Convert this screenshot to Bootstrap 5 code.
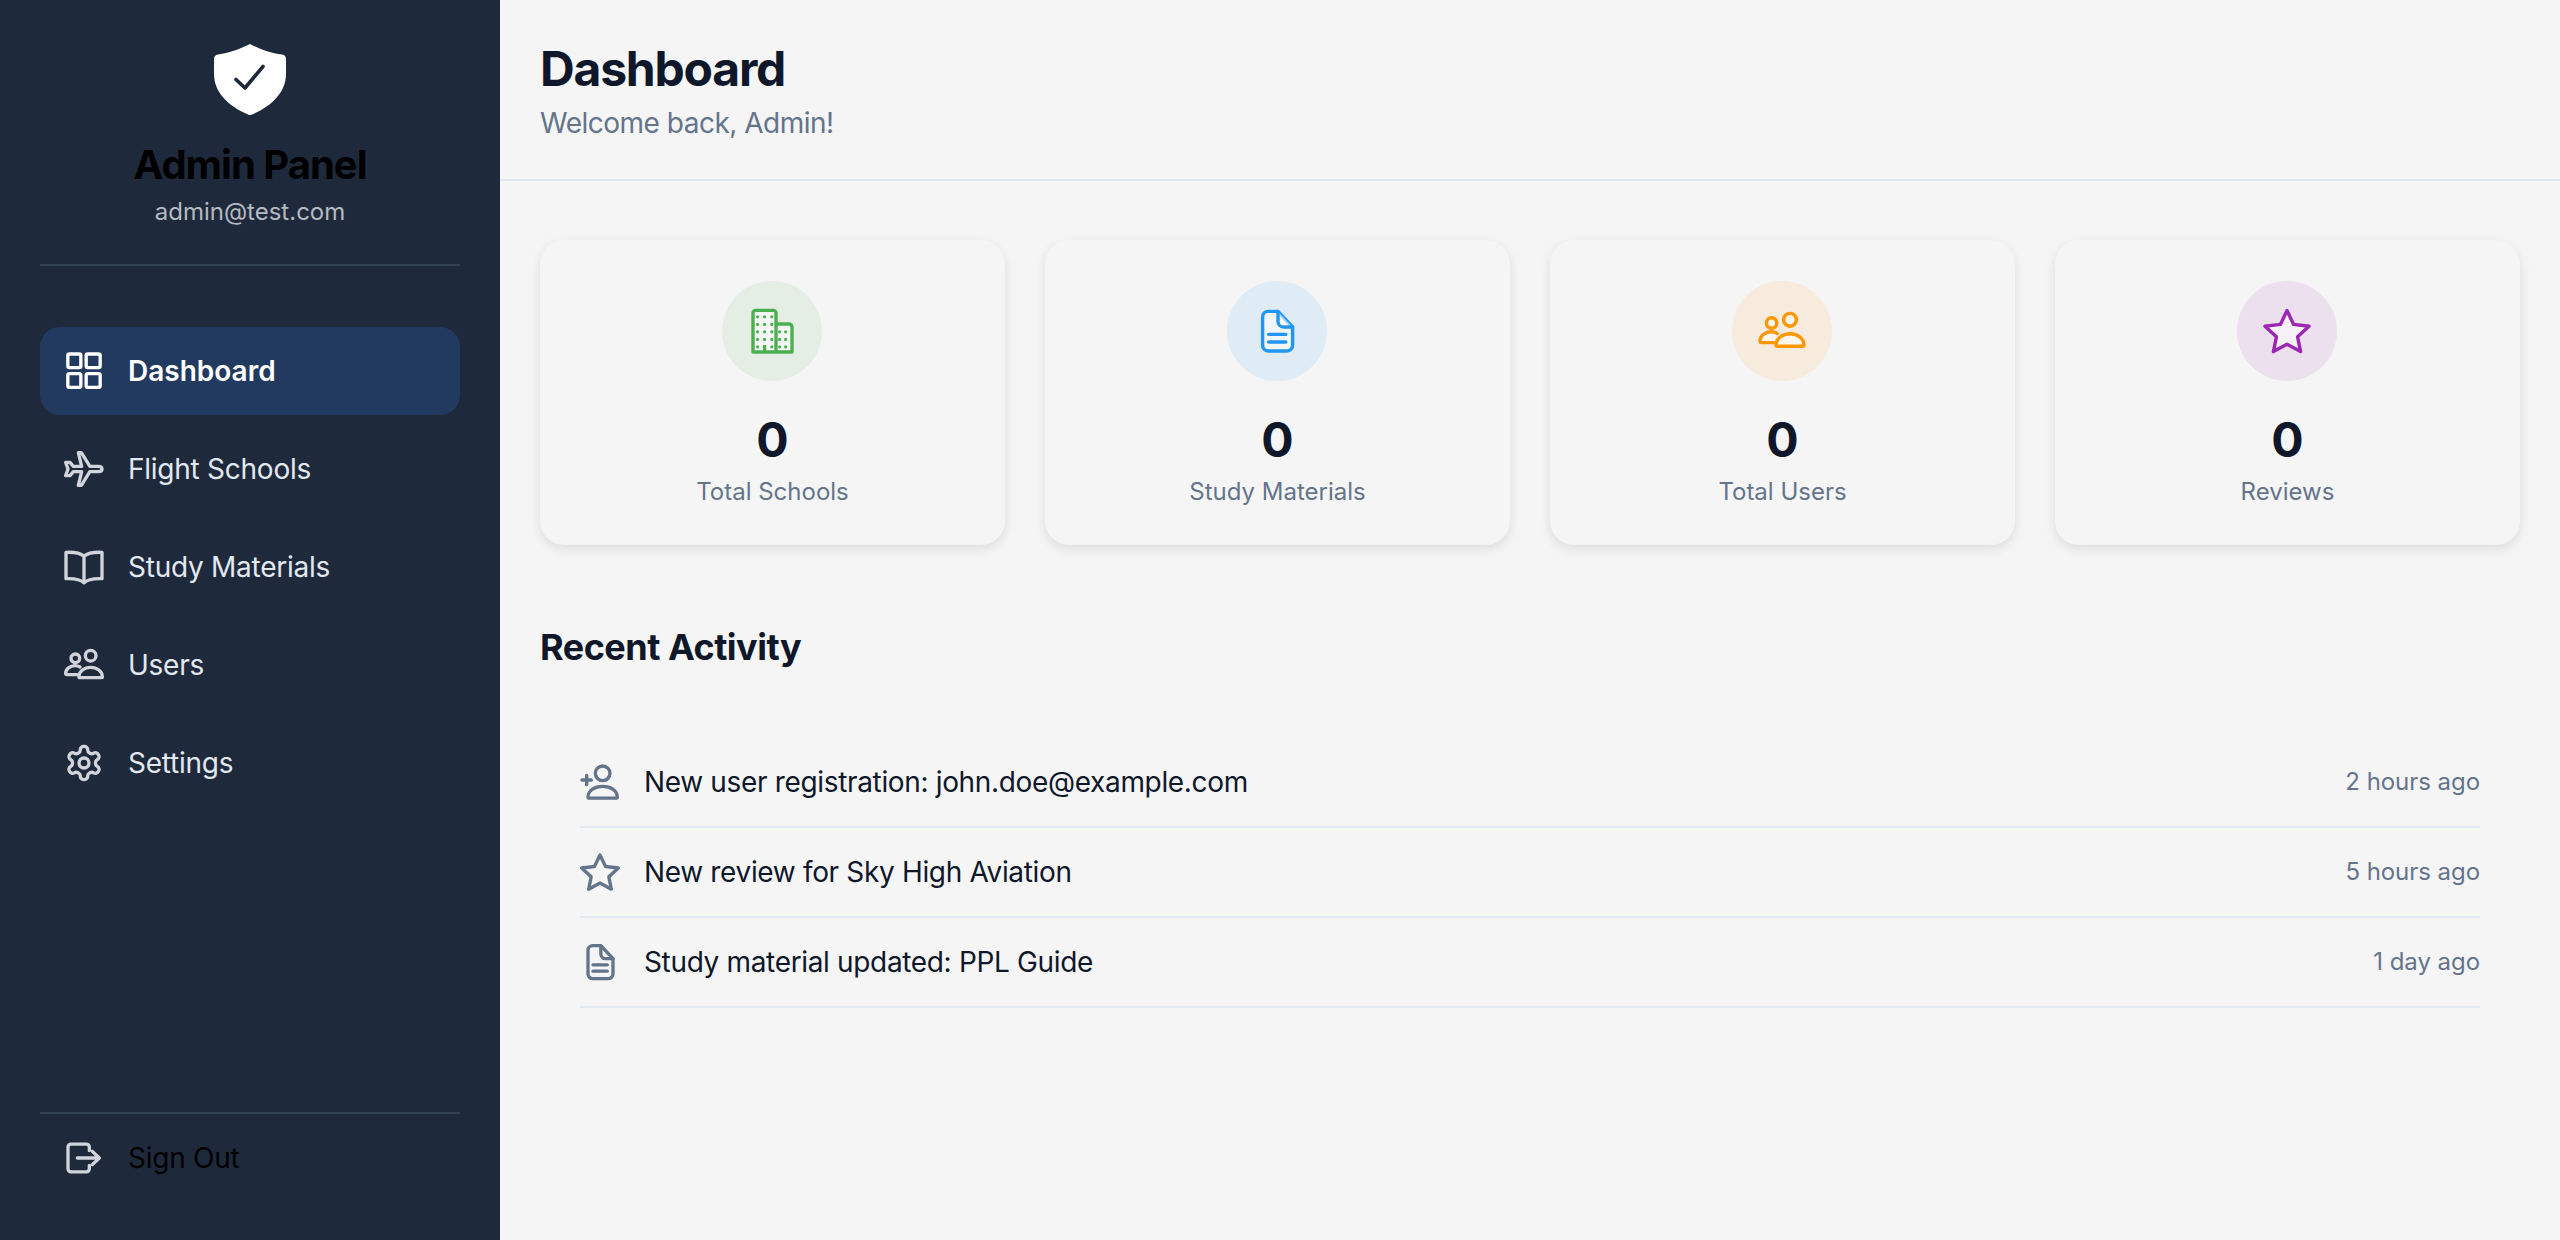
<!DOCTYPE html>
<html>

<head>
  <title>Admin Panel</title>
  <link href="https://cdn.jsdelivr.net/npm/bootstrap@5.3.2/dist/css/bootstrap.min.css" rel="stylesheet" type="text/css" />
  <style>
    html, body { height: 100%; }
    body { font-family: "Inter", "Liberation Sans", sans-serif; background: #f5f5f5; overflow: hidden; }

    /* sidebar */
    .side-panel { width: 500px; height: 1240px; background: #1e293b; padding: 40px 40px 38px; flex-shrink: 0; }
    .side-brand { height: 226px; border-bottom: 2px solid #334155; margin-bottom: 61px; }
    .brand-title { font-size: 40px; line-height: 48px; font-weight: 700; color: #000; margin: 25px 0 0; letter-spacing: -1px; }
    .brand-mail { font-size: 24px; line-height: 32px; color: #b5b9c1; margin-top: 7px; }
    .side-link { height: 88px; padding: 0 24px; gap: 24px; border-radius: 20px; font-size: 28px; color: #e2e8f0; text-decoration: none; margin-bottom: 10px; letter-spacing: -.25px; }
    .side-link svg { color: #d1d5db; }
    .side-link.current { background: #233a60; color: #fff; font-weight: 600; letter-spacing: 0; }
    .side-link.current svg { color: #fff; }
    .side-foot { border-top: 2px solid #334155; margin-top: auto; }
    .side-foot .side-link { color: #000; margin: 0; }

    /* main */
    .page-top { height: 181px; padding: 41px 40px 0; border-bottom: 2px solid #e2e8f0; }
    .page-title { font-size: 48px; line-height: 56px; font-weight: 700; color: #0f172a; margin: 0; letter-spacing: -1.2px; }
    .page-sub { font-size: 28px; line-height: 36px; color: #64748b; margin-top: 8px; letter-spacing: -.5px; }
    .page-body { padding: 59px 40px 0; }
    .stat-grid { display: grid; grid-template-columns: repeat(4, 465px); gap: 40px; }
    .stat-box { height: 305px; padding-top: 41px; border-radius: 24px; background: #f5f5f5; box-shadow: 0 4px 12px rgba(0, 0, 0, .1); text-align: center; }
    .stat-circle { width: 100px; height: 100px; border-radius: 50%; margin: 0 183px 29px 182px; }
    .stat-value { font-size: 48px; line-height: 60px; font-weight: 700; color: #0f172a; }
    .stat-label { font-size: 24px; line-height: 32px; color: #64748b; margin-top: 6px; }
    .tone-green { color: #4caf50; background: rgba(76, 175, 80, .1); }
    .tone-blue { color: #2196f3; background: rgba(33, 150, 243, .1); }
    .tone-orange { color: #ff9800; background: rgba(255, 152, 0, .1); }
    .tone-purple { color: #9c27b0; background: rgba(156, 39, 176, .1); }
    .section-title { font-size: 36px; line-height: 44px; font-weight: 700; color: #0f172a; margin: 80px 0 69px; letter-spacing: -.5px; }
    .activity-list { margin: 0 40px; }
    .activity-row { height: 90px; gap: 24px; border-bottom: 2px solid #e2e8f0; }
    .activity-row svg { color: #64748b; }
    .activity-text { font-size: 28px; color: #0f172a; letter-spacing: -.34px; }
    .activity-time { font-size: 24px; color: #64748b; margin-left: auto; letter-spacing: -.05px; }

    .line-icon { fill: none; stroke: currentColor; stroke-width: 2; stroke-linecap: round; stroke-linejoin: round; flex-shrink: 0; }
    .duo-icon { fill: rgba(255, 255, 255, .55); stroke: currentColor; stroke-width: 1.7; stroke-linecap: round; stroke-linejoin: round; }
    .duo-icon .dot { fill: currentColor; stroke: none; }
  </style>
</head>

<body>
  <svg width="0" height="0" class="position-absolute">
    <symbol id="ic-grid" viewBox="0 0 24 24"><rect x="2.300" y="1.800" width="7.800" height="8.200" rx="1"/><rect x="13.300" y="1.800" width="8.400" height="8.200" rx="1"/><rect x="2.300" y="13.600" width="7.800" height="8.200" rx="1"/><rect x="13.300" y="13.600" width="8.400" height="8.200" rx="1"/></symbol>
    <symbol id="ic-plane" viewBox="0 0 24 24"><path d="M22.800 12c0-1-1-1.600-2.200-1.600h-5.100L10.700 2.600a.7.7 0 0 0-.6-.4H8.600l2 8.200h-5L3.600 8H1l1.400 4L1 16h2.600l2-2.400h5l-2 8.200h1.500a.7.7 0 0 0 .6-.4l4.800-7.800h5.100c1.200 0 2.200-.6 2.200-1.600z"/></symbol>
    <symbol id="ic-book" viewBox="0 0 24 24"><path d="M12 5.500C10 3.800 6 3 1.200 3.200V19c4.800-.2 8.800.5 10.800 2.500 2-2 6-2.700 10.800-2.500V3.200C18 3 14 3.800 12 5.500zM12 5.500V21"/></symbol>
    <symbol id="ic-users" viewBox="0 0 24 24"><circle cx="6.800" cy="8" r="2.600"/><circle cx="16" cy="6.400" r="3.200"/><path d="M9 19c0-3.200 3.200-5.600 7-5.600s7 2.400 7 5.600q0 .6-.6.6H9.600q-.6 0-.6-.6z"/><path d="M9.600 13.200c-.9-.5-2-.8-3-.8-3 0-5.600 2-5.600 4.600q0 .8.8.8h6"/></symbol>
    <symbol id="ic-gear" viewBox="0 0 24 24"><path d="M12.220 2h-.44a2 2 0 0 0-2 2v.18a2 2 0 0 1-1 1.730l-.43.25a2 2 0 0 1-2 0l-.15-.08a2 2 0 0 0-2.730.73l-.22.38a2 2 0 0 0 .73 2.730l.15.1a2 2 0 0 1 1 1.720v.51a2 2 0 0 1-1 1.740l-.15.09a2 2 0 0 0-.73 2.730l.22.38a2 2 0 0 0 2.730.73l.15-.08a2 2 0 0 1 2 0l.43.25a2 2 0 0 1 1 1.730V20a2 2 0 0 0 2 2h.44a2 2 0 0 0 2-2v-.18a2 2 0 0 1 1-1.730l.43-.25a2 2 0 0 1 2 0l.15.08a2 2 0 0 0 2.730-.73l.22-.39a2 2 0 0 0-.73-2.730l-.15-.08a2 2 0 0 1-1-1.740v-.5a2 2 0 0 1 1-1.740l.15-.09a2 2 0 0 0 .73-2.730l-.22-.38a2 2 0 0 0-2.730-.73l-.15.08a2 2 0 0 1-2 0l-.43-.25a2 2 0 0 1-1-1.730V4a2 2 0 0 0-2-2z"/><circle cx="12" cy="12" r="3"/></symbol>
    <symbol id="ic-out" viewBox="0 0 24 24"><path d="M15.200 7.500V5.500a1.800 1.800 0 0 0-1.800-1.800H4.200a1.800 1.800 0 0 0-1.800 1.800v13a1.800 1.800 0 0 0 1.800 1.800h9.200a1.800 1.800 0 0 0 1.800-1.800v-2"/><path d="M8 12h13M17 8l4.200 4-4.200 4"/></symbol>
    <symbol id="ic-doc" viewBox="0 0 24 24"><path d="M4.800 5a2.800 2.800 0 0 1 2.800-2.800H12.500L19.800 10v9.200a2.800 2.800 0 0 1-2.800 2.800H7.600a2.800 2.800 0 0 1-2.800-2.800z"/><path d="M12.500 2.200V7.200a2.800 2.800 0 0 0 2.800 2.800h4.500M7.800 13.700h8.600M7.800 17.500h8.600"/></symbol>
    <symbol id="ic-star" viewBox="0 0 24 24"><path d="M12 1.800l3.300 6.900 7.700.9-5.700 5.300 1.500 7.400-6.800-3.700-6.800 3.700 1.500-7.400L1 9.600l7.700-.9z"/></symbol>
    <symbol id="ic-useradd" viewBox="0 0 24 24"><circle cx="13.600" cy="6.800" r="4.400"/><path d="M4.800 21c0-3.800 3.800-6.400 8.800-6.400s8.800 2.600 8.800 6.400q0 .7-.7.7H5.500q-.7 0-.7-.7zM1.200 10.800h5.600M4 8v5.600"/></symbol>
  </svg>

  <div class="d-flex">
    <aside class="side-panel d-flex flex-column">
      <div class="side-brand text-center">
        <svg width="72" height="72" viewBox="0 0 72 72" class="d-block mx-auto" style="margin-top:4px">
          <path fill="#fff" d="M36 0C44 4 56 9 68 10.500Q72 11 72 15V30C72 48 58 62 38 70.500Q36 71.500 34 70.500C14 62 0 48 0 30V15Q0 11 4 10.500C16 9 28 4 36 0Z"/>
          <path fill="none" stroke="#1e293b" stroke-width="3.600" stroke-linecap="round" stroke-linejoin="round" d="M22 35.500L31 44L49 22.500"/>
        </svg>
        <h2 class="brand-title">Admin Panel</h2>
        <div class="brand-mail">admin@test.com</div>
      </div>

      <a href="#" class="side-link current d-flex align-items-center">
        <svg class="line-icon" width="40" height="40"><use href="#ic-grid"/></svg>Dashboard
      </a>
      <a href="#" class="side-link d-flex align-items-center">
        <svg class="line-icon" width="40" height="40"><use href="#ic-plane"/></svg>Flight Schools
      </a>
      <a href="#" class="side-link d-flex align-items-center">
        <svg class="line-icon" width="40" height="40"><use href="#ic-book"/></svg>Study Materials
      </a>
      <a href="#" class="side-link d-flex align-items-center">
        <svg class="line-icon" width="40" height="40"><use href="#ic-users"/></svg>Users
      </a>
      <a href="#" class="side-link d-flex align-items-center">
        <svg class="line-icon" width="40" height="40"><use href="#ic-gear"/></svg>Settings
      </a>

      <div class="side-foot">
        <a href="#" class="side-link d-flex align-items-center">
          <svg class="line-icon" width="40" height="40"><use href="#ic-out"/></svg>Sign Out
        </a>
      </div>
    </aside>

    <main class="flex-grow-1">
      <header class="page-top">
        <h1 class="page-title">Dashboard</h1>
        <div class="page-sub">Welcome back, Admin!</div>
      </header>

      <section class="page-body">
        <div class="stat-grid">
          <div class="stat-box">
            <div class="stat-circle tone-green d-flex align-items-center justify-content-center">
              <svg class="duo-icon" width="48" height="48" viewBox="0 0 24 24">
                <path d="M2.500 22.500V3a1.300 1.300 0 0 1 1.300-1.300h8.900A1.300 1.300 0 0 1 14 3v19.500zM14 8.500h6.500a1.500 1.500 0 0 1 1.500 1.500v12.500h-8z"/>
                <g class="dot">
                  <circle cx="4.800" cy="4.900" r=".8"/><circle cx="8.300" cy="4.900" r=".8"/><circle cx="11.900" cy="4.900" r=".8"/>
                  <circle cx="4.800" cy="8.700" r=".8"/><circle cx="8.300" cy="8.700" r=".8"/><circle cx="11.900" cy="8.700" r=".8"/>
                  <circle cx="4.800" cy="12.400" r=".8"/><circle cx="8.300" cy="12.400" r=".8"/><circle cx="11.900" cy="12.400" r=".8"/>
                  <circle cx="4.800" cy="16.200" r=".8"/><circle cx="8.300" cy="16.200" r=".8"/><circle cx="11.900" cy="16.200" r=".8"/>
                  <circle cx="4.800" cy="19.900" r=".8"/><circle cx="11.900" cy="19.900" r=".8"/>
                  <rect x="7.500" y="19" width="1.600" height="3.500"/>
                  <circle cx="15.800" cy="12.400" r=".8"/><circle cx="18.800" cy="12.400" r=".8"/>
                  <circle cx="15.800" cy="16.200" r=".8"/><circle cx="18.800" cy="16.200" r=".8"/>
                  <circle cx="15.800" cy="19.900" r=".8"/><circle cx="18.800" cy="19.900" r=".8"/>
                </g>
              </svg>
            </div>
            <div class="stat-value">0</div>
            <div class="stat-label">Total Schools</div>
          </div>
          <div class="stat-box">
            <div class="stat-circle tone-blue d-flex align-items-center justify-content-center">
              <svg class="duo-icon" width="48" height="48"><use href="#ic-doc"/></svg>
            </div>
            <div class="stat-value">0</div>
            <div class="stat-label">Study Materials</div>
          </div>
          <div class="stat-box">
            <div class="stat-circle tone-orange d-flex align-items-center justify-content-center">
              <svg class="duo-icon" width="48" height="48"><use href="#ic-users"/></svg>
            </div>
            <div class="stat-value">0</div>
            <div class="stat-label">Total Users</div>
          </div>
          <div class="stat-box">
            <div class="stat-circle tone-purple d-flex align-items-center justify-content-center">
              <svg class="duo-icon" width="48" height="48"><use href="#ic-star"/></svg>
            </div>
            <div class="stat-value">0</div>
            <div class="stat-label">Reviews</div>
          </div>
        </div>

        <h3 class="section-title">Recent Activity</h3>

        <div class="activity-list">
          <div class="activity-row d-flex align-items-center">
            <svg class="line-icon" width="40" height="40"><use href="#ic-useradd"/></svg>
            <span class="activity-text">New user registration: john.doe@example.com</span>
            <span class="activity-time">2 hours ago</span>
          </div>
          <div class="activity-row d-flex align-items-center">
            <svg class="line-icon" width="40" height="40"><use href="#ic-star"/></svg>
            <span class="activity-text">New review for Sky High Aviation</span>
            <span class="activity-time">5 hours ago</span>
          </div>
          <div class="activity-row d-flex align-items-center">
            <svg class="line-icon" width="40" height="40"><use href="#ic-doc"/></svg>
            <span class="activity-text">Study material updated: PPL Guide</span>
            <span class="activity-time">1 day ago</span>
          </div>
        </div>
      </section>
    </main>
  </div>

  <script src="https://cdn.jsdelivr.net/npm/bootstrap@5.3.2/dist/js/bootstrap.bundle.min.js"></script>
</body>

</html>
